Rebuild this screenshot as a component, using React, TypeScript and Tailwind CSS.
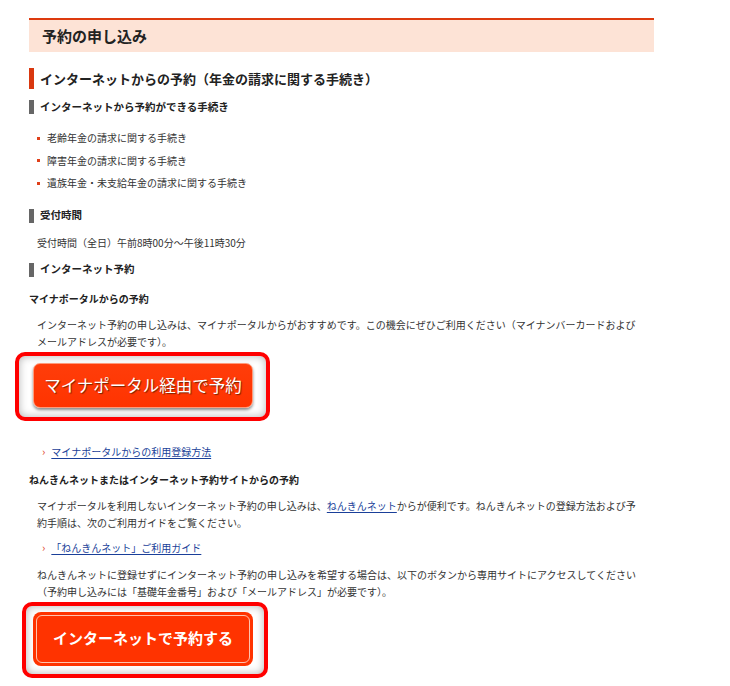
import React from "react";

const Bar = ({ children }: { children: React.ReactNode }) => (
  <div className="flex items-center h-[14px] border-l-[5px] border-[#666] pl-[6px] text-[10.5px] font-bold text-[#222] leading-none">
    {children}
  </div>
);

const ArrowLink = ({ children }: { children: React.ReactNode }) => (
  <div className="flex items-center pl-[13px] leading-[17px] text-[10px]">
    <span className="text-[#e0401a] text-[11px] mr-[6px]">›</span>
    <a href="#" className="text-[#1a3f99] underline underline-offset-2">
      {children}
    </a>
  </div>
);

export default function App() {
  const items = [
    "老齢年金の請求に関する手続き",
    "障害年金の請求に関する手続き",
    "遺族年金・未支給年金の請求に関する手続き",
  ];

  return (
    <div className="w-[730px] h-[686px] bg-white overflow-hidden text-[#333] font-['Noto_Sans_CJK_JP',sans-serif]">
      <div className="ml-[29px] w-[625px] pt-[18px] flex flex-col">
        {/* page heading */}
        <div className="h-[34px] border-t-2 border-[#dd3a0e] bg-[#fde3d6] flex items-center pl-[13px] text-[15px] font-bold text-[#222]">
          予約の申し込み
        </div>

        <div className="mt-[16px] h-[21px] border-l-[5px] border-[#d9380f] pl-[6px] flex items-center text-[13px] font-bold text-[#222]">
          インターネットからの予約（年金の請求に関する手続き）
        </div>

        <div className="mt-[11px]">
          <Bar>インターネットから予約ができる手続き</Bar>
        </div>

        <ul className="mt-[13px] flex flex-col text-[10px] leading-[22.5px]">
          {items.map((t) => (
            <li key={t} className="flex items-center pl-[8px]">
              <span className="w-[3px] h-[3px] bg-[#e0401a] mr-[7px]" />
              {t}
            </li>
          ))}
        </ul>

        <div className="mt-[14px]">
          <Bar>受付時間</Bar>
        </div>
        <p className="mt-[11px] pl-[8px] text-[10px] leading-[17px]">
          受付時間（全日）午前8時00分～午後11時30分
        </p>

        <div className="mt-[12px]">
          <Bar>インターネット予約</Bar>
        </div>

        <div className="mt-[13px] text-[10px] font-bold text-[#222] leading-[17px]">
          マイナポータルからの予約
        </div>
        <p className="mt-[9px] pl-[8px] text-[10px] leading-[17px]">
          インターネット予約の申し込みは、マイナポータルからがおすすめです。この機会にぜひご利用ください（マイナンバーカードおよび
          <br />
          メールアドレスが必要です）。
        </p>

        {/* highlighted button 1 */}
        <div className="mt-[2px] -ml-[14px] w-[255px] h-[69px] border-[4px] border-[#ff0000] rounded-[10px] bg-white shadow-[inset_0_0_8px_rgba(0,0,0,0.3)] pl-[14px] pt-[7px]">
          <button className="w-[220px] h-[45px] rounded-[7px] bg-gradient-to-b from-[#ff3d0a] to-[#ff3300] border border-[#ff9a7a] shadow-[0_2px_3px_rgba(0,0,0,0.45)] text-white text-[16.5px] [text-shadow:1px_1px_1px_#7a2200] flex items-center justify-center">
            マイナポータル経由で予約
          </button>
        </div>

        <div className="mt-[22px]">
          <ArrowLink>マイナポータルからの利用登録方法</ArrowLink>
        </div>

        <div className="mt-[11px] text-[10px] font-bold text-[#222] leading-[17px]">
          ねんきんネットまたはインターネット予約サイトからの予約
        </div>
        <p className="mt-[9px] pl-[8px] text-[10px] leading-[17px]">
          マイナポータルを利用しないインターネット予約の申し込みは、
          <a href="#" className="text-[#1a3f99] underline underline-offset-2">
            ねんきんネット
          </a>
          からが便利です。ねんきんネットの登録方法および予
          <br />
          約手順は、次のご利用ガイドをご覧ください。
        </p>

        <div className="mt-[8px]">
          <ArrowLink>「ねんきんネット」ご利用ガイド</ArrowLink>
        </div>

        <p className="mt-[10px] pl-[8px] text-[10px] leading-[17px]">
          ねんきんネットに登録せずにインターネット予約の申し込みを希望する場合は、以下のボタンから専用サイトにアクセスしてください
          <br />
          （予約申し込みには「基礎年金番号」および「メールアドレス」が必要です）。
        </p>

        {/* highlighted button 2 */}
        <div className="mt-[2px] -ml-[7px] w-[246px] h-[76px] border-[4px] border-[#ff0000] rounded-[10px] bg-white shadow-[inset_0_0_8px_rgba(0,0,0,0.3)] pl-[7px] pt-[6px]">
          <button className="w-[220px] h-[54px] rounded-[8px] bg-[#ff3300] p-[3px]">
            <span className="w-full h-full rounded-[6px] border border-[#ffc2ad] flex items-center justify-center text-white text-[15px] font-bold">
              インターネットで予約する
            </span>
          </button>
        </div>
      </div>
    </div>
  );
}
